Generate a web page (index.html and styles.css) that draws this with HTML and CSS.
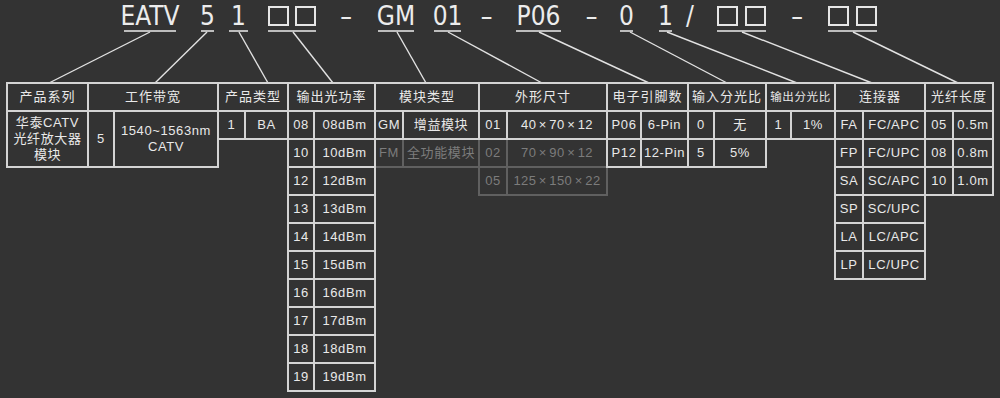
FILE: index.html
```html
<!doctype html>
<html>

<head>
  <meta charset="UTF-8">
  <title>EATV 型号命名规则</title>
  <link rel="stylesheet" href="styles.css">
</head>

<body>
  <div class="sheet">

    <!-- model code, one underlined part per field -->
    <div class="code">
      <span class="part series">EATV</span>
      <span class="part band">5</span>
      <span class="part ptype">1</span>
      <span class="part power"><i class="box"></i><i class="box"></i></span>
      <span class="part bare dash-a">–</span>
      <span class="part module">GM</span>
      <span class="part size">01</span>
      <span class="part bare dash-b">–</span>
      <span class="part pin">P06</span>
      <span class="part bare dash-c">–</span>
      <span class="part split-in">0</span>
      <span class="part split-out">1</span>
      <span class="part bare slash">/</span>
      <span class="part conn"><i class="box"></i><i class="box"></i></span>
      <span class="part bare dash-d">–</span>
      <span class="part len"><i class="box"></i><i class="box"></i></span>
    </div>

    <!-- leader lines from each part down to its column -->
    <svg class="leaders" width="1000" height="90" viewBox="0 0 1000 90">
      <g stroke="#e2e2e2" stroke-width="1.4" fill="none">
        <line x1="150" y1="32" x2="49" y2="83" />
        <line x1="207" y1="32" x2="155" y2="83" />
        <line x1="239" y1="32" x2="268" y2="83" />
        <line x1="293" y1="32" x2="333" y2="83" />
        <line x1="397" y1="32" x2="426" y2="83" />
        <line x1="448" y1="32" x2="542" y2="83" />
        <line x1="539" y1="32" x2="649" y2="83" />
        <line x1="630" y1="32" x2="727" y2="83" />
        <line x1="667" y1="32" x2="797" y2="83" />
        <line x1="742" y1="32" x2="872" y2="83" />
        <line x1="853" y1="32" x2="958" y2="83" />
      </g>
    </svg>

    <div class="spec">

      <div class="group g-series">
        <div class="cell head">产品系列</div>
        <div class="cell tall">华泰CATV<br>光纤放大器<br>模块</div>
      </div>

      <div class="group g-band">
        <div class="cell head">工作带宽</div>
        <div class="cell tall">5</div>
        <div class="cell tall">1540~1563nm<br>CATV</div>
      </div>

      <div class="group g-ptype">
        <div class="cell head">产品类型</div>
        <div class="cell">1</div>
        <div class="cell">BA</div>
      </div>

      <div class="group g-power">
        <div class="cell head">输出光功率</div>
        <div class="cell">08</div><div class="cell">08dBm</div>
        <div class="cell">10</div><div class="cell">10dBm</div>
        <div class="cell">12</div><div class="cell">12dBm</div>
        <div class="cell">13</div><div class="cell">13dBm</div>
        <div class="cell">14</div><div class="cell">14dBm</div>
        <div class="cell">15</div><div class="cell">15dBm</div>
        <div class="cell">16</div><div class="cell">16dBm</div>
        <div class="cell">17</div><div class="cell">17dBm</div>
        <div class="cell">18</div><div class="cell">18dBm</div>
        <div class="cell">19</div><div class="cell">19dBm</div>
      </div>

      <div class="group g-module">
        <div class="cell head">模块类型</div>
        <div class="cell">GM</div><div class="cell">增益模块</div>
        <div class="cell dim">FM</div><div class="cell dim">全功能模块</div>
      </div>

      <div class="group g-size">
        <div class="cell head">外形尺寸</div>
        <div class="cell">01</div><div class="cell dims">40 × 70 × 12</div>
        <div class="cell dim">02</div><div class="cell dim dims">70 × 90 × 12</div>
        <div class="cell dim">05</div><div class="cell dim dims">125 × 150 × 22</div>
      </div>

      <div class="group g-pin">
        <div class="cell head">电子引脚数</div>
        <div class="cell">P06</div><div class="cell">6-Pin</div>
        <div class="cell">P12</div><div class="cell">12-Pin</div>
      </div>

      <div class="group g-in">
        <div class="cell head">输入分光比</div>
        <div class="cell">0</div><div class="cell">无</div>
        <div class="cell">5</div><div class="cell">5%</div>
      </div>

      <div class="group g-out">
        <div class="cell head small">输出分光比</div>
        <div class="cell">1</div><div class="cell">1%</div>
      </div>

      <div class="group g-conn">
        <div class="cell head">连接器</div>
        <div class="cell">FA</div><div class="cell">FC/APC</div>
        <div class="cell">FP</div><div class="cell">FC/UPC</div>
        <div class="cell">SA</div><div class="cell">SC/APC</div>
        <div class="cell">SP</div><div class="cell">SC/UPC</div>
        <div class="cell">LA</div><div class="cell">LC/APC</div>
        <div class="cell">LP</div><div class="cell">LC/UPC</div>
      </div>

      <div class="group g-len">
        <div class="cell head">光纤长度</div>
        <div class="cell">05</div><div class="cell">0.5m</div>
        <div class="cell">08</div><div class="cell">0.8m</div>
        <div class="cell">10</div><div class="cell">1.0m</div>
      </div>

    </div>
  </div>
</body>

</html>
```

FILE: styles.css
```css
body {
  margin: 0;
  background: #333;
  color: #e9e9e9;
  font: 13px/16px "Liberation Sans", "Noto Sans CJK SC", sans-serif;
}

.sheet {
  position: relative;
  width: 1000px;
  height: 398px;
  overflow: hidden;
}

/* model code */

.code {
  display: flex;
  padding-top: 3px;
  font: 26px/26px "Liberation Sans Narrow", "DejaVu Sans Condensed", "Liberation Sans", sans-serif;
  color: #ececec;
}

.part {
  display: flex;
  align-items: center;
  justify-content: center;
  height: 26px;
  padding-bottom: 1px;
  border-bottom: 2px solid #bdbdbd;
  white-space: nowrap;
}

.part.bare {
  border-bottom-color: transparent;
}

.box {
  display: block;
  width: 21px;
  height: 20px;
  box-sizing: border-box;
  border: 2px solid #e6e6e6;
}

.box + .box {
  margin-left: 6px;
}

.conn .box + .box,
.len .box + .box {
  margin-left: 7px;
}

.series    { margin-left: 124px; width: 52px; }
.band      { margin-left: 25px;  width: 13px; }
.ptype     { margin-left: 15px;  width: 19px; }
.power     { margin-left: 20px;  width: 48px; }
.dash-a    { margin-left: 24px;  width: 12px; }
.module    { margin-left: 26px;  width: 36px; }
.size      { margin-left: 20px;  width: 27px; }
.dash-b    { margin-left: 19px;  width: 13px; }
.pin       { margin-left: 23px;  width: 45px; }
.dash-c    { margin-left: 24px;  width: 13px; }
.split-in  { margin-left: 22px;  width: 13px; }
.split-out { margin-left: 26px;  width: 13px; }
.slash     { margin-left: 14px;  width: 8px; }
.conn      { margin-left: 23px;  width: 49px; }
.dash-d    { margin-left: 24px;  width: 14px; }
.len       { margin-left: 24px;  width: 49px; }

.leaders {
  position: absolute;
  top: 0;
  left: 0;
}

/* spec table, one grid per code field */

.spec {
  display: flex;
  align-items: flex-start;
  margin: 51px 0 0 7px;
}

.group {
  display: grid;
  grid-auto-rows: 28px;
}

.g-series { grid-template-columns: 81px; }
.g-band   { grid-template-columns: 26px 104px; }
.g-ptype  { grid-template-columns: 27px 43px; }
.g-power  { grid-template-columns: 26px 61px; }
.g-module { grid-template-columns: 28px 76px; }
.g-size   { grid-template-columns: 28px 100px; }
.g-pin    { grid-template-columns: 34px 47px; }
.g-in     { grid-template-columns: 26px 52px; }
.g-out    { grid-template-columns: 25px 44px; }
.g-conn   { grid-template-columns: 28px 62px; }
.g-len    { grid-template-columns: 28px 40px; }

.cell {
  z-index: 1;
  display: flex;
  align-items: center;
  justify-content: center;
  margin: -1px;
  border: 2px solid #d4d4d4;
  text-align: center;
  letter-spacing: 0.6px;
  white-space: nowrap;
}

.head {
  grid-column: 1 / -1;
  letter-spacing: 1px;
}

.head.small {
  font-size: 11.5px;
  letter-spacing: 0.6px;
}

.tall {
  grid-row: span 2;
}

/* "40 × 70 × 12" style sizes sit tighter */
.dims {
  letter-spacing: 0.4px;
  word-spacing: -1.5px;
}

.dim {
  z-index: 0;
  border-color: #606060;
  color: #7c7c7c;
}
```
